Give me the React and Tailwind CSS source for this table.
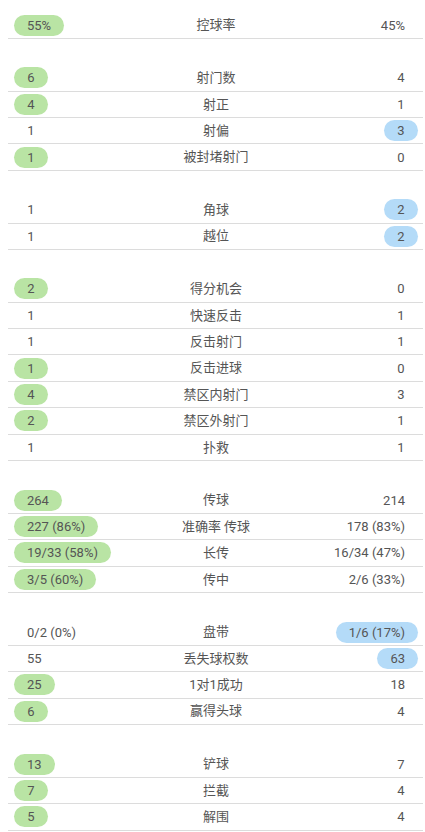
const sections = [
  [["55%", "控球率", "45%", "l"]],
  [
    ["6", "射门数", "4", "l"],
    ["4", "射正", "1", "l"],
    ["1", "射偏", "3", "r"],
    ["1", "被封堵射门", "0", "l"],
  ],
  [
    ["1", "角球", "2", "r"],
    ["1", "越位", "2", "r"],
  ],
  [
    ["2", "得分机会", "0", "l"],
    ["1", "快速反击", "1", ""],
    ["1", "反击射门", "1", ""],
    ["1", "反击进球", "0", "l"],
    ["4", "禁区内射门", "3", "l"],
    ["2", "禁区外射门", "1", "l"],
    ["1", "扑救", "1", ""],
  ],
  [
    ["264", "传球", "214", "l"],
    ["227 (86%)", "准确率 传球", "178 (83%)", "l"],
    ["19/33 (58%)", "长传", "16/34 (47%)", "l"],
    ["3/5 (60%)", "传中", "2/6 (33%)", "l"],
  ],
  [
    ["0/2 (0%)", "盘带", "1/6 (17%)", "r"],
    ["55", "丢失球权数", "63", "r"],
    ["25", "1对1成功", "18", "l"],
    ["6", "赢得头球", "4", "l"],
  ],
  [
    ["13", "铲球", "7", "l"],
    ["7", "拦截", "4", "l"],
    ["5", "解围", "4", "l"],
  ],
];

function Pill({ value, on, color }) {
  return (
    <span
      className={`inline-block h-[21px] min-w-[34px] px-[13px] rounded-full text-center leading-[21px] whitespace-nowrap ${
        on ? color : "bg-transparent"
      }`}
    >
      {value}
    </span>
  );
}

function Row({ row }) {
  const [left, label, right, lead] = row;
  return (
    <div className="grid grid-cols-[1fr_auto_1fr] items-center h-[26.4px] border-b border-[#dcdcdc] pl-[6px] pr-[5px]">
      <div className="flex justify-start">
        <Pill value={left} on={lead === "l"} color="bg-[#b9e4a4]" />
      </div>
      <div className="text-center whitespace-nowrap">{label}</div>
      <div className="flex justify-end">
        <Pill value={right} on={lead === "r"} color="bg-[#b4dbf8]" />
      </div>
    </div>
  );
}

export default function App() {
  return (
    <div
      className="w-[425px] h-[832px] bg-white text-[13px] text-[#555] overflow-hidden pt-[12.4px]"
      style={{ fontFamily: "Roboto, 'Noto Sans CJK SC', sans-serif" }}
    >
      <div className="ml-[8px] mr-[2px]">
        {sections.map((sec, i) => (
          <div key={i}>
            {i > 0 && <div className="h-[26.4px]" />}
            {sec.map((row) => (
              <Row key={row[1]} row={row} />
            ))}
          </div>
        ))}
      </div>
    </div>
  );
}
